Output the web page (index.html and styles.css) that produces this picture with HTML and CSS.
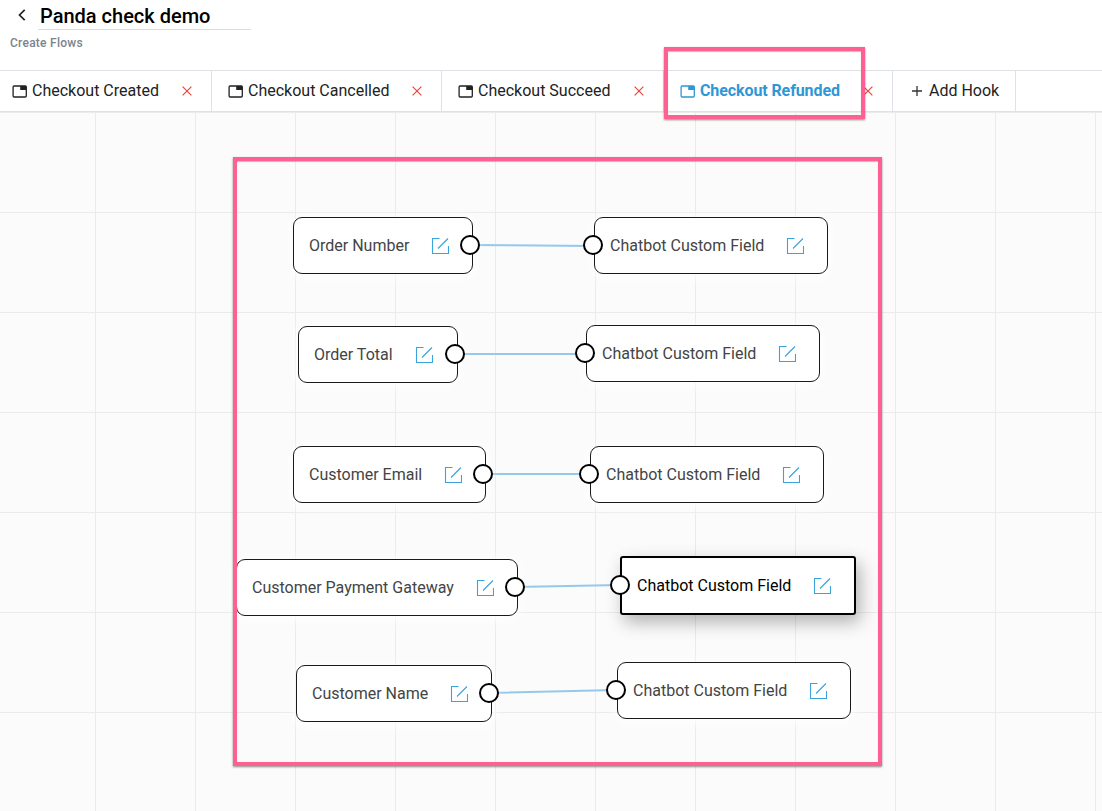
FILE: index.html
```
<!DOCTYPE html>
<html lang="en">
<head>
  <meta charset="UTF-8" />
  <meta name="viewport" content="width=device-width, initial-scale=1.0"/>
  <title>Panda check demo</title>
  <link rel="stylesheet" href="styles.css">
</head>
<body>
  <!-- shared icons -->
  <svg class="sprite" width="0" height="0">
    <symbol id="tab-icon" viewBox="0 0 15 13">
      <rect x="1.1" y="1" width="13.2" height="11" rx="1" fill="none" stroke="currentColor" stroke-width="1.3"/>
      <path d="M8.2 1h6v4h-6z" fill="currentColor"/>
    </symbol>
    <symbol id="close-icon" viewBox="0 0 10 10">
      <path d="M.6 .6l8.8 8.8M9.4 .6L.6 9.4" fill="none" stroke="currentColor" stroke-width="1.2"/>
    </symbol>
    <symbol id="edit-icon" viewBox="0 0 18 18">
      <path d="M8.5 1.5H1.5V16.5H17.5V9M7 11.5L17 1.5" fill="none" stroke="currentColor" stroke-width="1.1"/>
    </symbol>
  </svg>

  <header class="header">
    <div class="title-row">
      <svg class="back" width="8" height="12" viewBox="0 0 8 12"><path d="M6.7 .8L1.5 6l5.2 5.2" fill="none" stroke="#222" stroke-width="1.7"/></svg>
      <h1 class="title">Panda check demo</h1>
    </div>
    <p class="subtitle">Create Flows</p>
  </header>

  <nav class="tabs">
    <div class="tab tab-created">
      <svg class="tab-icon"><use href="#tab-icon"/></svg>
      <span class="tab-name">Checkout Created</span>
      <svg class="close"><use href="#close-icon"/></svg>
    </div>
    <div class="tab tab-cancelled">
      <svg class="tab-icon"><use href="#tab-icon"/></svg>
      <span class="tab-name">Checkout Cancelled</span>
      <svg class="close"><use href="#close-icon"/></svg>
    </div>
    <div class="tab tab-succeed">
      <svg class="tab-icon"><use href="#tab-icon"/></svg>
      <span class="tab-name">Checkout Succeed</span>
      <svg class="close"><use href="#close-icon"/></svg>
    </div>
    <div class="tab tab-refunded active">
      <svg class="tab-icon"><use href="#tab-icon"/></svg>
      <span class="tab-name">Checkout Refunded</span>
      <svg class="close"><use href="#close-icon"/></svg>
    </div>
    <div class="tab tab-add">
      <svg class="plus" width="10" height="10" viewBox="0 0 10 10"><path d="M5 0v10M0 5h10" stroke="#333" stroke-width="1.3"/></svg>
      <span class="tab-name">Add Hook</span>
    </div>
  </nav>

  <main class="canvas">
    <svg class="edges" width="1102" height="699">
      <path d="M470 133L593 134M455 242H585M483 362H589M515 475L620 473M489 581L616 578"/>
    </svg>

    <div class="node source order-number"><span class="label">Order Number</span><svg class="edit"><use href="#edit-icon"/></svg><i class="port"></i></div>
    <div class="node source order-total"><span class="label">Order Total</span><svg class="edit"><use href="#edit-icon"/></svg><i class="port"></i></div>
    <div class="node source customer-email"><span class="label">Customer Email</span><svg class="edit"><use href="#edit-icon"/></svg><i class="port"></i></div>
    <div class="node source payment-gateway"><span class="label">Customer Payment Gateway</span><svg class="edit"><use href="#edit-icon"/></svg><i class="port"></i></div>
    <div class="node source customer-name"><span class="label">Customer Name</span><svg class="edit"><use href="#edit-icon"/></svg><i class="port"></i></div>

    <div class="node target field-1"><span class="label">Chatbot Custom Field</span><svg class="edit"><use href="#edit-icon"/></svg><i class="port"></i></div>
    <div class="node target field-2"><span class="label">Chatbot Custom Field</span><svg class="edit"><use href="#edit-icon"/></svg><i class="port"></i></div>
    <div class="node target field-3"><span class="label">Chatbot Custom Field</span><svg class="edit"><use href="#edit-icon"/></svg><i class="port"></i></div>
    <div class="node target field-4 selected"><span class="label">Chatbot Custom Field</span><svg class="edit"><use href="#edit-icon"/></svg><i class="port"></i></div>
    <div class="node target field-5"><span class="label">Chatbot Custom Field</span><svg class="edit"><use href="#edit-icon"/></svg><i class="port"></i></div>
  </main>

  <div class="highlight highlight-tab"></div>
  <div class="highlight highlight-flow"></div>
</body>
</html>
```
FILE: styles.css
```
* { box-sizing: border-box; }
body { margin: 0; height: 811px; overflow: hidden; position: relative; display: flex; flex-direction: column; background: #fff; font-family: Roboto, Arial, sans-serif; font-size: 16px; color: #222; }
svg { display: block; flex: none; }
.sprite { position: absolute; }

.header { height: 70px; padding-left: 10px; }
.title-row { display: flex; align-items: center; height: 30px; padding-left: 8px; }
.back { margin-right: 12px; }
.title { width: 213px; height: 30px; margin: 0; padding-left: 2px; border-bottom: 1px solid #dcdfe2; font-size: 20px; font-weight: 500; line-height: 32px; color: #000; white-space: nowrap; }
.subtitle { margin: 5px 0 0; font-size: 12px; font-weight: 500; line-height: 16px; letter-spacing: 0.25px; color: #7b848c; }

.tabs { display: flex; height: 42px; border-top: 1px solid #dee2e6; border-bottom: 1px solid #dee2e6; }
.tab { display: flex; align-items: center; border-right: 1px solid #dee2e6; padding: 0 19px 0 16px; white-space: nowrap; }
.tab-name { padding-bottom: 2px; }
.tab-icon { width: 15px; height: 13px; margin-right: 5px; }
.close { width: 10px; height: 10px; margin-left: auto; color: #e8483f; }
.tab-created { width: 212px; padding-left: 12px; }
.tab-cancelled { width: 230px; }
.tab-succeed { width: 222px; }
.tab-refunded { width: 229px; }
.tab-add { width: 123px; padding-left: 19px; }
.plus { margin-right: 7px; }
.active { color: #2f97d6; }
.active .tab-name { font-weight: 700; letter-spacing: -0.1px; }

.canvas { position: relative; flex: 1; background-color: #fbfbfb; background-image: linear-gradient(#ebebeb 1px, transparent 1px), linear-gradient(90deg, #ebebeb 1px, transparent 1px); background-size: 100px 100px; background-position: 95px 0; }
.edges { position: absolute; top: 0; left: 0; fill: none; stroke: #96c8ec; stroke-width: 2; }

.node { position: absolute; display: flex; align-items: center; justify-content: space-between; height: 57px; padding: 0 23px 0 15px; border: 1px solid #1a1a1a; border-radius: 9px; background: #fff; color: #444; box-shadow: 0 2px 12px 2px rgba(255, 255, 255, 0.9); white-space: nowrap; }
.target { width: 234px; }
.edit { width: 18px; height: 18px; color: #3aa3dc; }
.order-total .edit { margin-right: 1px; }
.port { position: absolute; top: 17px; width: 20px; height: 20px; border: 2px solid #000; border-radius: 50%; background: #fff; }
.source .port { right: -8px; }
.target .port { left: -12px; }

.order-number { left: 293px; top: 105px; width: 180px; }
.order-total { left: 298px; top: 214px; width: 160px; }
.customer-email { left: 293px; top: 334px; width: 193px; }
.payment-gateway { left: 236px; top: 447px; width: 282px; }
.customer-name { left: 296px; top: 553px; width: 196px; }
.field-1 { left: 594px; top: 105px; }
.field-2 { left: 586px; top: 213px; }
.field-3 { left: 590px; top: 334px; }
.field-4 { left: 620px; top: 444px; }
.field-5 { left: 617px; top: 550px; }

.selected { width: 236px; height: 59px; border: 2px solid #000; border-radius: 3px; color: #000; box-shadow: 4px 7px 18px rgba(0, 0, 0, 0.3); }

/* callout frames over the page */
.highlight { position: absolute; border: 4px solid #ff6092; box-shadow: 0 1px 2px rgba(0, 0, 0, 0.45), inset 0 1px 1px rgba(0, 0, 0, 0.25); }
.highlight-tab { left: 664px; top: 47px; width: 201px; height: 72px; }
.highlight-flow { left: 233px; top: 157px; width: 649px; height: 609px; }
```
